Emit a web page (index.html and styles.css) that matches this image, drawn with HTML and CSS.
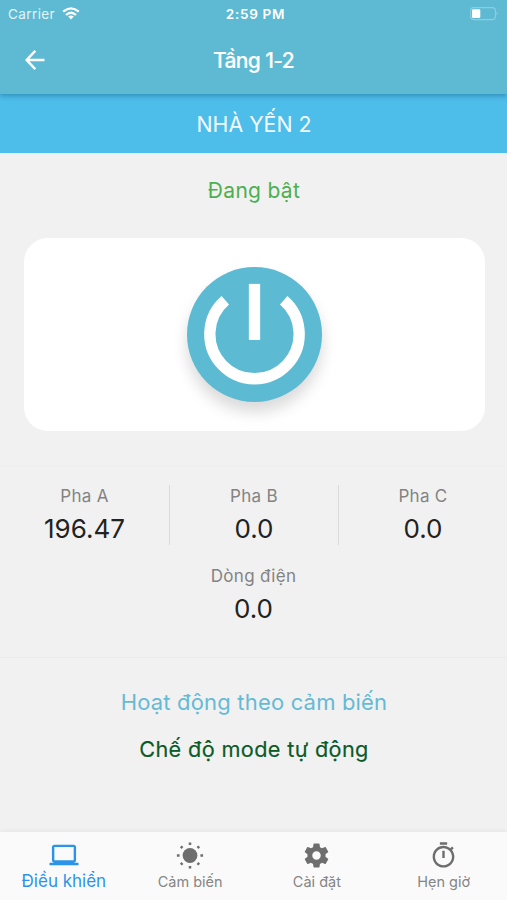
FILE: index.html
```html
<!DOCTYPE html>
<html lang="vi">
<head>
<meta charset="utf-8">
<meta name="viewport" content="width=device-width, initial-scale=1">
<title>Tầng 1-2</title>
<link rel="stylesheet" href="styles.css">
</head>
<body>
<div class="app">
  <header class="header">
    <div class="status">
      <div class="carrier"><span class="carrier-name">Carrier</span>
        <svg class="wifi" viewBox="0 0 18 13" width="18" height="13"><g fill="none" stroke="#fff" stroke-width="2.3"><path d="M1.2 4.7Q9 -1.9 16.8 4.7"/><path d="M4 8Q9 3.6 14 8"/></g><path d="M6.2 9.6Q9 7.4 11.8 9.6L9 12.5z" fill="#fff"/></svg>
      </div>
      <span class="time">2:59 PM</span>
      <svg class="battery" viewBox="0 0 28 14" width="28" height="14"><rect x=".6" y=".6" width="24.8" height="12" rx="3" fill="none" stroke="#8acfe0" stroke-width="1.1"/><path d="M26.5 4.5q2 2 0 4z" fill="#8acfe0"/><rect x="2" y="2.2" width="8.3" height="8.8" rx="1.2" fill="#fff"/></svg>
    </div>
    <div class="toolbar">
      <svg class="back" viewBox="0 0 20 20" width="20" height="20"><path d="M19.5 10H1.8M10.3 .9L1.6 10l8.7 9.1" fill="none" stroke="#fff" stroke-width="2.4"/></svg>
      <h1 class="title">Tầng 1-2</h1>
      <span></span>
    </div>
  </header>
  <div class="banner"><span class="banner-text">NHÀ YẾN 2</span></div>
  <main class="main">
    <p class="state"><span class="state-text">Đang bật</span></p>
    <section class="card">
      <button class="power" aria-label="Nguồn">
        <svg viewBox="0 0 136 136" width="135" height="135"><g fill="none" stroke="#fff" stroke-width="11.4"><path d="M68 17v56.5"/><path d="M38.6 33.5A45 45 0 1 0 97.4 33.5"/></g></svg>
      </button>
    </section>
    <section class="readings">
      <div class="phases">
        <div class="reading"><span class="label">Pha A</span><span class="value">196.47</span></div>
        <div class="reading"><span class="label">Pha B</span><span class="value">0.0</span></div>
        <div class="reading"><span class="label">Pha C</span><span class="value">0.0</span></div>
      </div>
      <div class="reading current"><span class="label">Dòng điện</span><span class="value">0.0</span></div>
    </section>
    <section class="modes">
      <p class="mode-link"><span>Hoạt động theo cảm biến</span></p>
      <p class="mode-auto"><span>Chế độ mode tự động</span></p>
    </section>
  </main>
  <nav class="tabs">
    <a class="tab active">
      <svg viewBox="0 0 24 24" width="30" height="30" fill="currentColor"><path d="M20 18c1.100 0 1.990-.9 1.990-2L22 5c0-1.100-.9-2-2-2H4c-1.100 0-2 .9-2 2v11c0 1.100.9 2 2 2H0v2h24v-2h-4zM4 5h16v11H4V5z"/></svg>
      <span>Điều khiển</span>
    </a>
    <a class="tab">
      <svg viewBox="0 0 28 28" width="28" height="28"><circle cx="14" cy="14" r="7.400" fill="currentColor"/><path d="M14 .9v2.700M14 24.400v2.700M.9 14h2.700M24.400 14h2.700M4.800 4.800l1.700 1.700M21.500 21.500l1.700 1.700M4.800 23.200l1.700-1.700M21.500 6.500l1.700-1.700" stroke="currentColor" stroke-width="2.500"/></svg>
      <span>Cảm biến</span>
    </a>
    <a class="tab">
      <svg viewBox="0 0 24 24" width="29" height="29" fill="currentColor"><path d="M19.430 12.980c.04-.32.07-.64.07-.98s-.03-.66-.07-.98l2.110-1.650c.19-.15.24-.42.12-.64l-2-3.460c-.12-.22-.39-.3-.61-.22l-2.490 1c-.52-.4-1.080-.73-1.690-.98l-.38-2.650C14.460 2.180 14.250 2 14 2h-4c-.25 0-.46.18-.49.42l-.38 2.650c-.61.25-1.170.59-1.690.98l-2.490-1c-.23-.09-.49 0-.61.22l-2 3.460c-.13.22-.07.49.12.64l2.110 1.650c-.04.32-.07.65-.07.98s.03.66.07.98l-2.110 1.650c-.19.15-.24.42-.12.64l2 3.460c.12.22.39.3.61.22l2.490-1c.52.4 1.080.73 1.690.98l.38 2.650c.03.24.24.42.49.42h4c.25 0 .46-.18.49-.42l.38-2.650c.61-.25 1.170-.59 1.690-.98l2.490 1c.23.09.49 0 .61-.22l2-3.460c.12-.22.07-.49-.12-.64l-2.110-1.650zM12 15.500c-1.930 0-3.500-1.570-3.500-3.500s1.570-3.500 3.500-3.500 3.500 1.570 3.500 3.500-1.570 3.500-3.500 3.500z"/></svg>
      <span>Cài đặt</span>
    </a>
    <a class="tab">
      <svg viewBox="0 0 24 24" width="29" height="29" fill="currentColor"><path d="M15 1H9v2h6V1zm-4 13h2V8h-2v6zm8.030-6.610l1.420-1.420c-.43-.51-.9-.99-1.410-1.410l-1.420 1.420C16.070 4.740 14.120 4 12 4c-4.970 0-9 4.030-9 9s4.020 9 9 9 9-4.030 9-9c0-2.120-.74-4.070-1.970-5.610zM12 20c-3.870 0-7-3.130-7-7s3.130-7 7-7 7 3.130 7 7-3.130 7-7 7z"/></svg>
      <span>Hẹn giờ</span>
    </a>
  </nav>
</div>
</body>
</html>
```
FILE: styles.css
```css
* { box-sizing: border-box; }
body { margin: 0; font-family: Inter, "Noto Sans", sans-serif; background: #f1f1f1; }
p, h1 { margin: 0; font-weight: 400; }
.app { display: flex; flex-direction: column; height: 900px; width: 507px; overflow: hidden; }
.header { height: 94px; background: #5ebad2; color: #fff; box-shadow: 0 2px 5px rgba(0, 60, 90, .35); z-index: 1; flex: none; }
.status { display: grid; grid-template-columns: 1fr auto 1fr; height: 27px; align-items: center; padding: 0 9px 0 8px; }
.carrier { display: flex; align-items: center; gap: 7px; color: #e2f4f8; }
.carrier-name { font-size: 13.500px; letter-spacing: .4px; }
.time { font-size: 13.500px; font-weight: 600; letter-spacing: .7px; padding-left: 5px; }
.battery { justify-self: end; }
.toolbar { display: grid; grid-template-columns: 1fr auto 1fr; align-items: center; height: 66px; padding: 0 25px; }
.title { font-size: 21px; font-weight: 500; letter-spacing: -.65px; -webkit-text-stroke: .15px #fff; }
.banner { height: 59px; flex: none; background: #4dbdea; color: #f4fbff; display: flex; align-items: center; justify-content: center; font-size: 21.300px; padding-left: 1px; }
.main { flex: 1; text-align: center; }
.state { height: 85px; line-height: 75px; color: #4caf50; font-size: 21px; letter-spacing: .3px; padding-left: 1px; }
.card { margin: 0 22.500px 0 23.500px; height: 193px; background: #fff; border-radius: 24px; display: flex; align-items: center; justify-content: center; }
.power { width: 135px; height: 135px; border: 0; padding: 0; border-radius: 50%; background: #5cbad2; box-shadow: 0 10px 15px rgba(0, 0, 0, .15); }
.power svg { display: block; }
.readings { margin-top: 35px; height: 192px; border-top: 1px solid #eee; border-bottom: 1px solid #ebebeb; padding-top: 18px; }
.phases { display: grid; grid-template-columns: repeat(3, 1fr); height: 60px; }
.reading { display: flex; flex-direction: column; align-items: center; }
.phases .reading + .reading { border-left: 1px solid #dadada; }
.label { font-size: 17px; line-height: 22px; color: #838383; letter-spacing: .3px; }
.value { font-size: 26px; line-height: 32px; margin-top: 6px; color: #222; }
.current { margin-top: 20px; }
.modes { padding-top: 26px; }
.mode-link { color: #65bad5; font-size: 22px; line-height: 36px; letter-spacing: .18px; padding-left: 1px; }
.mode-auto { color: #0b5a28; font-size: 21.700px; line-height: 36px; margin-top: 11px; letter-spacing: .35px; -webkit-text-stroke: .15px #0b5a28; padding-left: 1px; }
.tabs { height: 68px; flex: none; display: grid; grid-template-columns: repeat(4, 1fr); background: #fafafa; box-shadow: 0 -1px 5px rgba(0, 0, 0, .05); }
.tab { display: flex; flex-direction: column; align-items: center; color: #6e6e6e; padding-top: 9px; }
.tab svg { display: block; flex: none; height: 29px; }
.tab span { color: #858585; font-size: 14.500px; line-height: 20px; margin-top: 2px; }
.tab.active { color: #2b94e9; padding-left: 1px; }
.tab.active span { color: #2b94e9; font-size: 17px; margin-top: 1px; }
```
